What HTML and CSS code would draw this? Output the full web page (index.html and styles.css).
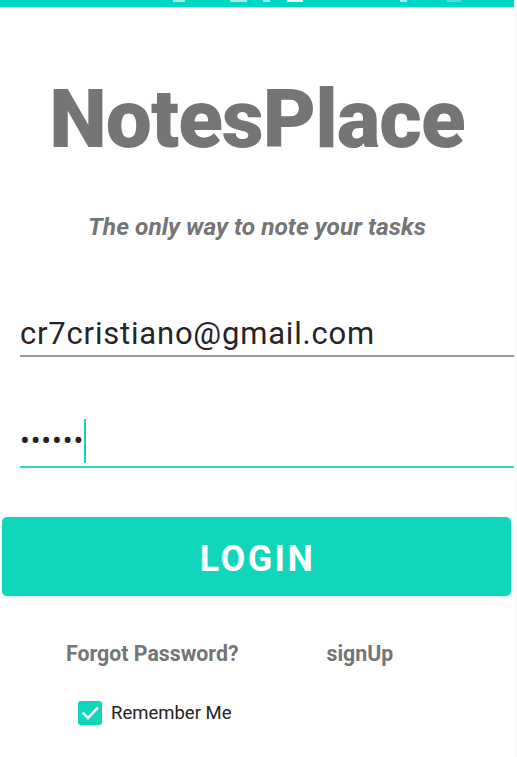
FILE: index.html
```html
<!DOCTYPE html>
<html>
<head>
<meta charset="utf-8">
<link rel="stylesheet" href="styles.css">
</head>
<body>
<div class="device">
  <div class="screen">
    <div class="status">
      <span class="si si1"></span>
      <span class="si si2"></span>
      <span class="si si3"></span>
      <span class="si si4"></span>
      <span class="si si5"></span>
      <span class="si si6"></span>
    </div>
    <h1 class="title">NotesPlace</h1>
    <p class="subtitle">The only way to note your tasks</p>
    <div class="field email">cr7cristiano@gmail.com</div>
    <div class="field password"><span class="dots">••••••</span><span class="cursor"></span></div>
    <button class="login">LOGIN</button>
    <div class="links">
      <span class="forgot">Forgot Password?</span>
      <span class="signup">signUp</span>
    </div>
    <label class="remember">
      <span class="check"><svg width="24" height="24" viewBox="0 0 24 24"><path d="M5.5 12.5 L10 17 L19 7.5" fill="none" stroke="#fff" stroke-width="2.6" stroke-linecap="square"/></svg></span>
      <span class="remember-text">Remember Me</span>
    </label>
  </div>
  <div class="edge"></div>
</div>
</body>
</html>
```
FILE: styles.css
```css
html, body {
  margin: 0;
  padding: 0;
  background: #fff;
}
body {
  font-family: Roboto, "Liberation Sans", sans-serif;
  width: 517px;
  height: 757px;
  overflow: hidden;
}
.device {
  display: flex;
  height: 757px;
}
.screen {
  width: 514px;
  display: flex;
  flex-direction: column;
  background: #fff;
}
.edge {
  flex: 1;
  background: #fafafa;
}
.status {
  height: 7px;
  background: #00d7c2;
  box-shadow: 0 1px 0 #b8f2ec;
  display: flex;
  align-items: flex-start;
  padding-left: 173px;
}
.si {
  height: 2px;
  background: #9eeee4;
}
.si1 { width: 12px; }
.si2 { width: 17px; margin-left: 45px; }
.si3 { width: 7px; margin-left: 16px; }
.si4 { width: 16px; margin-left: 17px; background: #e8fbf8; }
.si5 { width: 7px; margin-left: 97px; }
.si6 { width: 14px; margin-left: 40px; opacity: 0.5; }

.title {
  margin: 71px 0 0;
  font-size: 82px;
  line-height: 82px;
  font-weight: 900;
  color: #757575;
  text-align: center;
  letter-spacing: -1px;
}
.subtitle {
  margin: 55px 0 0;
  font-size: 24.5px;
  line-height: 23px;
  font-weight: 700;
  font-style: italic;
  color: #757575;
  text-align: center;
}
.field {
  margin-left: 20px;
}
.email {
  margin-top: 81px;
  font-size: 31px;
  line-height: 29px;
  letter-spacing: 0.8px;
  color: #252525;
  padding-bottom: 7px;
  border-bottom: 2px solid #9c9c9c;
}
.password {
  margin-top: 62px;
  height: 44px;
  display: flex;
  align-items: center;
  padding-bottom: 3px;
  border-bottom: 2px solid #2fd9c6;
}
.dots {
  font-size: 29px;
  line-height: 22px;
  color: #222;
  letter-spacing: 0.9px;
}
.cursor {
  width: 2px;
  height: 44px;
  background: #1ccdb8;
  margin-left: 0;
}
.login {
  margin: 49px 0 0 2px;
  width: 509px;
  height: 79px;
  border: none;
  border-radius: 5px;
  background: #10d6bb;
  box-shadow: 0 1px 3px rgba(0,0,0,0.15);
  color: #fff;
  font-family: Roboto, "Liberation Sans", sans-serif;
  font-size: 36px;
  line-height: 36px;
  font-weight: 700;
  letter-spacing: 2.4px;
  padding: 5px 0 0 2px;
  display: flex;
  align-items: center;
  justify-content: center;
}
.links {
  margin-top: 47px;
  display: flex;
  padding-left: 66px;
  font-size: 21.3px;
  line-height: 21px;
  font-weight: 700;
  color: #757575;
}
.signup {
  margin-left: 88px;
}
.remember {
  margin: 37px 0 0 78px;
  display: flex;
  align-items: center;
}
.check {
  width: 24px;
  height: 24px;
  border-radius: 3px;
  background: #12d5bd;
  display: block;
}
.check svg { display: block; }
.remember-text {
  margin-left: 9px;
  font-size: 18.5px;
  line-height: 19px;
  color: #222;
}
```
